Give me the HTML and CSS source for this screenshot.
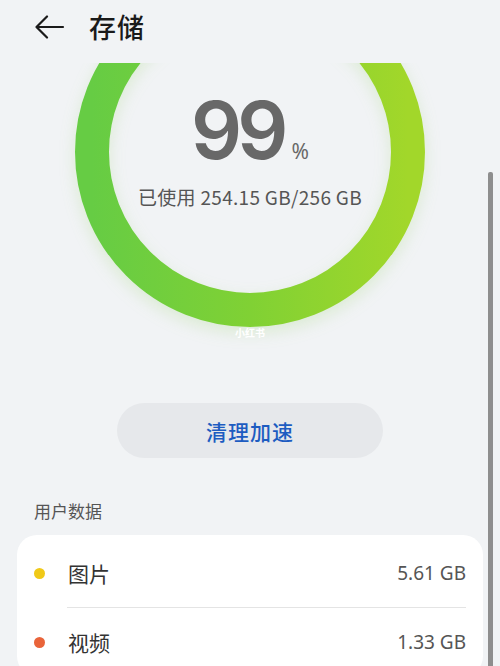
FILE: index.html
```html
<!DOCTYPE html>
<html lang="zh">
<head>
<meta charset="utf-8">
<link rel="stylesheet" href="styles.css">
</head>
<body>
<div class="app">
  <header class="topbar">
    <svg class="back" width="30" height="24" viewBox="0 0 30 24"><path d="M12 1.5 L1.5 12 L12 22.5 M1.5 12 H28" fill="none" stroke="#1a1a1a" stroke-width="2.2" stroke-linecap="round" stroke-linejoin="round"/></svg>
    <h1 class="title">存储</h1>
  </header>
  <section class="hero">
    <div class="ring">
      <svg class="ring-svg" width="350" height="350" viewBox="0 0 350 350">
        <defs>
          <linearGradient id="g" x1="0" y1="0" x2="1" y2="0">
            <stop offset="0" stop-color="#66cc44"/>
            <stop offset="0.5" stop-color="#80d134"/>
            <stop offset="1" stop-color="#a2d72a"/>
          </linearGradient>
        </defs>
        <circle cx="175" cy="175" r="158" fill="none" stroke="url(#g)" stroke-width="34"/>
      </svg>
      <div class="ring-text">
        <div class="pct"><span class="num">99</span><span class="unit">%</span></div>
        <div class="used">已使用 254.15 GB/256 GB</div>
      </div>
    </div>
    <div class="mark">小红书</div>
  </section>
  <div class="btn-wrap"><button class="clean">清理加速</button></div>
  <div class="section-label">用户数据</div>
  <div class="card">
    <div class="row">
      <span class="dot yellow"></span><span class="name">图片</span><span class="size">5.61 GB</span>
    </div>
    <div class="divider"></div>
    <div class="row">
      <span class="dot orange"></span><span class="name">视频</span><span class="size">1.33 GB</span>
    </div>
  </div>
  <div class="scrollbar"></div>
</div>
</body>
</html>
```
FILE: styles.css
```css
* { box-sizing: border-box; }
html, body { margin: 0; padding: 0; }
body {
  background: #f1f3f5;
  font-family: "Noto Sans CJK SC", "Noto Sans", sans-serif;
}
.app {
  position: relative;
  width: 500px;
  height: 666px;
  overflow: hidden;
  background: #f1f3f5;
}
.topbar {
  position: relative;
  z-index: 2;
  height: 63px;
  display: flex;
  align-items: center;
  padding-left: 35px;
  padding-bottom: 10px;
  background: #f1f3f5;
}
.back { display: block; }
.title {
  margin: 0 0 0 24px;
  font-size: 27px;
  font-weight: 500;
  color: #1a1a1a;
  letter-spacing: 1px;
}
.hero {
  position: relative;
  height: 340px;
  display: flex;
  justify-content: center;
}
.ring {
  position: relative;
  width: 350px;
  height: 350px;
  margin-top: -86px;
  flex: none;
}
.ring-svg {
  display: block;
  filter: drop-shadow(0 6px 8px rgba(120, 200, 60, 0.18));
}
.ring-text {
  position: absolute;
  left: 0;
  right: 0;
  top: 113px;
  display: flex;
  flex-direction: column;
  align-items: center;
}
.pct {
  display: flex;
  align-items: baseline;
  color: #686868;
}
.num {
  font-family: "Inter", "Noto Sans", sans-serif;
  font-size: 80px;
  font-weight: 600;
  line-height: 1;
  letter-spacing: -5px;
}
.unit {
  font-family: "Noto Sans", sans-serif;
  font-size: 21px;
  margin-left: 8px;
}
.used {
  margin-top: 13px;
  font-size: 19px;
  color: #555;
  letter-spacing: 0.3px;
}
.mark {
  position: absolute;
  left: 0;
  right: 0;
  top: 262px;
  text-align: center;
  font-size: 10px;
  font-weight: 700;
  color: #ffffff;
}
.btn-wrap {
  display: flex;
  justify-content: center;
}
.clean {
  width: 266px;
  height: 55px;
  border: none;
  border-radius: 28px;
  background: #e6e8eb;
  color: #1d5cc1;
  font-family: "Noto Sans CJK SC", sans-serif;
  font-size: 21px;
  font-weight: 500;
  letter-spacing: 1px;
}
.section-label {
  margin: 40px 0 0 34px;
  font-size: 17px;
  color: #555;
  line-height: 26px;
}
.card {
  margin: 11px 17px 0 17px;
  background: #fff;
  border-radius: 20px;
  padding: 4px 17px 0 17px;
}
.row {
  display: flex;
  align-items: center;
  height: 68px;
}
.dot {
  width: 11px;
  height: 11px;
  border-radius: 50%;
  flex: none;
}
.yellow { background: #f0c918; }
.orange { background: #e9643a; }
.name {
  margin-left: 23px;
  font-size: 21px;
  color: #333;
}
.size {
  margin-left: auto;
  font-family: "Noto Sans", sans-serif;
  font-size: 19px;
  color: #555;
}
.divider {
  height: 1px;
  background: #e4e4e4;
  margin-left: 33px;
}
.scrollbar {
  position: absolute;
  right: 7px;
  top: 172px;
  bottom: 0;
  width: 5px;
  background: #8e8e8e;
  border-radius: 2px 2px 0 0;
}
```
